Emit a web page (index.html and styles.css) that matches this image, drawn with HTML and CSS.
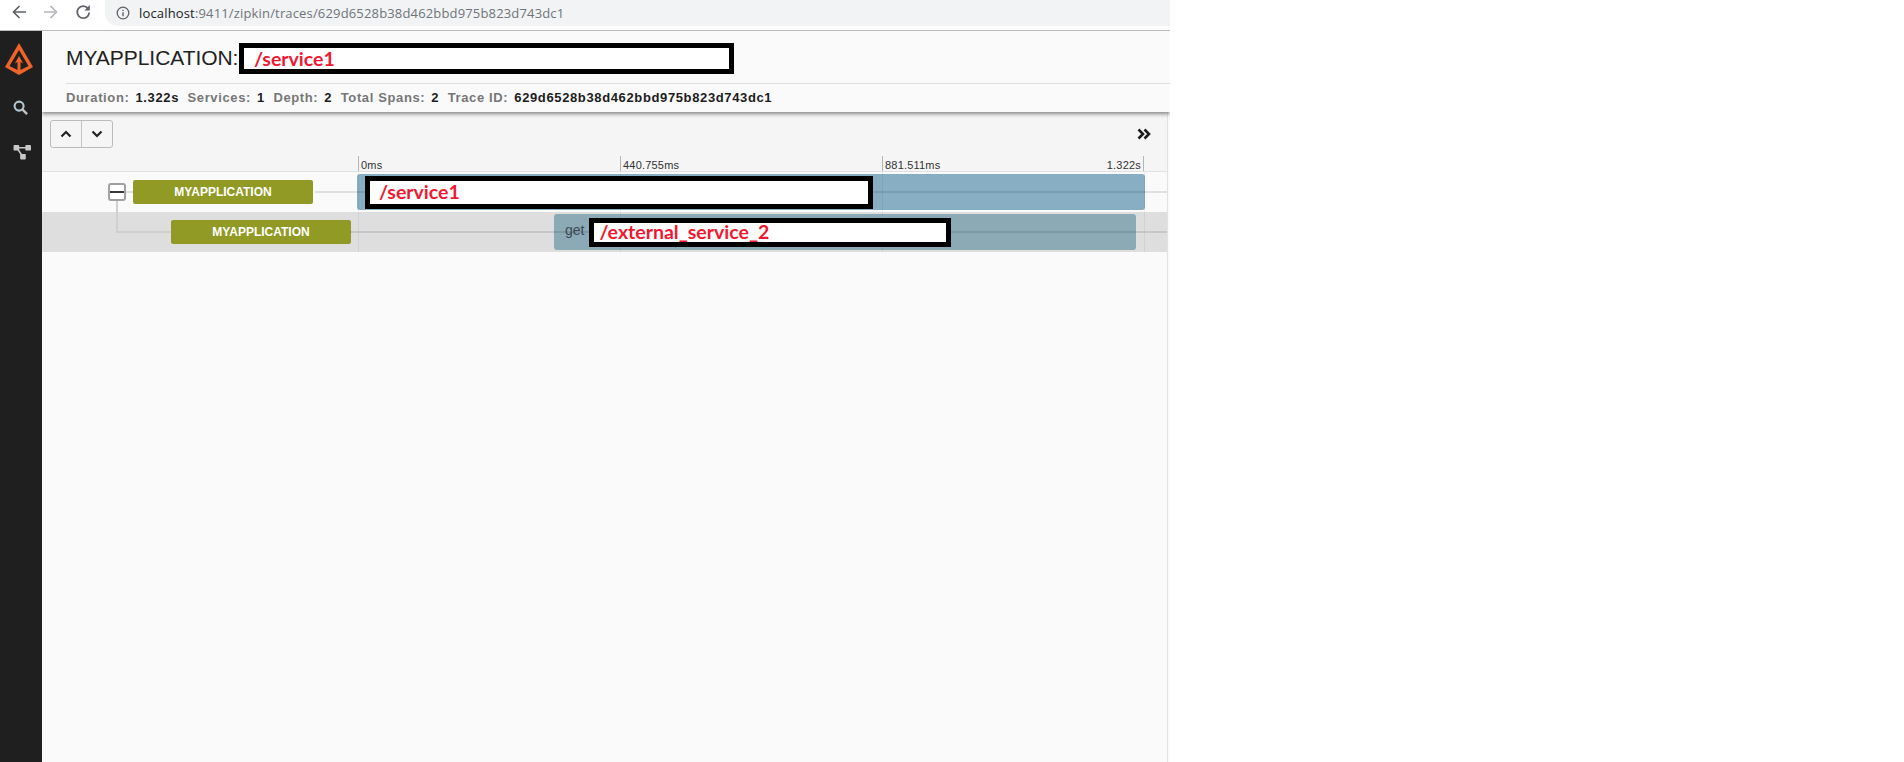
FILE: index.html
```html
<!DOCTYPE html>
<html lang="en">
<head>
<meta charset="utf-8">
<title>Zipkin trace</title>
<link rel="stylesheet" href="styles.css">
</head>
<body>
<div class="frame">
  <div class="browser">
    <div class="nav">
      <svg class="nav-icon" viewBox="0 0 16 16"><path d="M15 8H2.500M8.500 2 2.500 8l6 6" fill="none" stroke="#5f6368" stroke-width="1.700"/></svg>
      <svg class="nav-icon" viewBox="0 0 16 16"><path d="M1 8h12.500M7.500 2l6 6-6 6" fill="none" stroke="#b5b8bc" stroke-width="1.700"/></svg>
      <svg class="nav-icon" viewBox="0 0 16 16"><path d="M13 4.500A6 6 0 1 0 14.200 8.500" fill="none" stroke="#5f6368" stroke-width="1.800"/><path d="M14.800 1V6.500H9.300Z" fill="#5f6368"/></svg>
    </div>
    <div class="omnibox">
      <svg class="info" viewBox="0 0 14 14"><circle cx="7" cy="7" r="5.800" fill="none" stroke="#5f6368" stroke-width="1.300"/><path d="M7 6.200V10.300M7 3.700V5" stroke="#5f6368" stroke-width="1.400"/></svg>
      <span class="url"><span class="host">localhost</span>:9411/zipkin/traces/629d6528b38d462bbd975b823d743dc1</span>
    </div>
  </div>
  <div class="app">
    <nav class="sidebar">
      <svg class="logo" viewBox="0 0 28 32"><path d="M14 0 28 24 14 32 0 24Z" fill="#f0642c"/><path d="M14 7 4.500 23 12.500 27V19L9.800 20.500 14 13 18.200 20.500 15.500 19V27L23.500 23Z" fill="#1f1f1f"/></svg>
      <svg class="side-search" viewBox="0 0 16 16"><circle cx="6.500" cy="6.500" r="4.800" fill="none" stroke="#b4c6d2" stroke-width="2.200"/><path d="M10 10 15 15" stroke="#c4c4c4" stroke-width="2.500"/></svg>
      <svg class="side-deps" viewBox="0 0 20 17"><path d="M4 4H16M4 4 10 13" stroke="#c8c8c8" stroke-width="1.600"/><rect x="0.500" y="1" width="6" height="6" rx="1" fill="#c8c8c8"/><rect x="13" y="1" width="6" height="6" rx="1" fill="#c8c8c8"/><rect x="7.500" y="10.500" width="6" height="6" rx="1" fill="#c8c8c8"/></svg>
    </nav>
    <main class="main">
      <header class="trace-head">
        <div class="title-row">
          <span class="service-name">MYAPPLICATION:</span>
          <span class="redact redact-title">/service1</span>
        </div>
        <div class="stats">
          <span class="stat"><span class="stat-label">Duration:</span><b>1.322s</b></span>
          <span class="stat"><span class="stat-label">Services:</span><b>1</b></span>
          <span class="stat"><span class="stat-label">Depth:</span><b>2</b></span>
          <span class="stat"><span class="stat-label">Total Spans:</span><b>2</b></span>
          <span class="stat"><span class="stat-label">Trace ID:</span><b>629d6528b38d462bbd975b823d743dc1</b></span>
        </div>
      </header>
      <section class="timeline">
        <div class="toolbar">
          <div class="btn-group">
            <button class="btn" type="button" aria-label="Up"><svg viewBox="0 0 12 8"><path d="M1.500 6.500 6 2l4.500 4.500" fill="none" stroke="#222" stroke-width="2.200"/></svg></button>
            <button class="btn" type="button" aria-label="Down"><svg viewBox="0 0 12 8"><path d="M1.500 1.500 6 6l4.500-4.500" fill="none" stroke="#222" stroke-width="2.200"/></svg></button>
          </div>
          <svg class="expand" viewBox="0 0 14 12"><path d="M1.500 1.500 6 6 1.500 10.500M7.500 1.500 12 6 7.500 10.500" fill="none" stroke="#1c1c1c" stroke-width="2.600"/></svg>
        </div>
        <div class="ruler">
          <span class="tick">0ms</span>
          <span class="tick">440.755ms</span>
          <span class="tick">881.511ms</span>
          <span class="tick tick-end">1.322s</span>
        </div>
        <div class="rows">
          <div class="row">
            <div class="label-cell">
              <span class="toggle"></span>
              <span class="badge">MYAPPLICATION</span>
            </div>
            <div class="bar-cell">
              <div class="bar" style="margin-left:-1px;width:788px">
                <span class="redact redact-span">/service1</span>
              </div>
            </div>
          </div>
          <div class="row row-alt">
            <div class="label-cell label-child">
              <span class="elbow"></span>
              <span class="badge">MYAPPLICATION</span>
            </div>
            <div class="bar-cell bar-cell-child">
              <div class="bar bar-alt" style="margin-left:196px;width:582px">
                <span class="get">get</span>
                <span class="redact redact-child">/external_service_2</span>
              </div>
            </div>
          </div>
          <span class="grid-line" style="left:316px"></span>
          <span class="grid-line" style="left:578px"></span>
          <span class="grid-line" style="left:840px"></span>
          <span class="grid-line" style="left:1102px"></span>
        </div>
      </section>
    </main>
  </div>
</div>
</body>
</html>
```
FILE: styles.css
```css
* { box-sizing: border-box; }
html, body { margin: 0; padding: 0; background: #fff; height: 100%; overflow: hidden; }
body { font-family: "Liberation Sans", Arial, sans-serif; color: #222; }
.frame { width: 1170px; height: 762px; display: flex; flex-direction: column; }

.browser { height: 31px; flex: none; display: flex; background: #fff; border-bottom: 1px solid #bdbdbd; }
.nav { width: 105px; flex: none; display: flex; align-items: flex-start; gap: 16px; padding: 4px 0 0 11px; }
.nav-icon { width: 16px; height: 16px; flex: none; }
.omnibox { flex: 1; height: 26px; background: #f1f3f4; border-bottom-left-radius: 13px; display: flex; align-items: center; padding: 0 0 1px 11px; gap: 9px; }
.info { width: 14px; height: 14px; flex: none; }
.url { font-family: "Open Sans", sans-serif; font-size: 13px; letter-spacing: .16px; color: #70757a; white-space: nowrap; }
.host { color: #202124; }

.app { flex: 1; display: flex; min-height: 0; }
.sidebar { width: 42px; flex: none; background: #1f1f1f; display: flex; flex-direction: column; align-items: flex-start; padding-top: 12px; }
.logo { width: 28px; height: 32px; margin-left: 5px; }
.side-search { width: 15px; height: 15px; margin: 25px 0 0 13px; }
.side-deps { width: 19px; height: 16px; margin: 29px 0 0 13px; }

.main { flex: 1; display: flex; flex-direction: column; background: #fafafa; min-width: 0; overflow: hidden; }
.trace-head { height: 81px; flex: none; background: #fafafa; padding-left: 24px; box-shadow: 0 2px 4px rgba(0,0,0,.45); position: relative; z-index: 1; }
.title-row { height: 53px; display: flex; align-items: flex-start; padding-top: 12px; border-bottom: 1px solid #dedede; }
.service-name { font-size: 21px; line-height: 30px; color: #222; letter-spacing: -.05px; width: 173px; flex: none; }
.redact { display: block; position: relative; z-index: 3; background: #fff; border: 5px solid #000; color: #f01830; font-family: Lato, "Open Sans", sans-serif; font-weight: 700; white-space: nowrap; overflow: hidden; }
.redact-title { width: 495px; height: 31px; font-size: 19.500px; line-height: 21px; padding-left: 10px; }
.stats { height: 28px; padding-bottom: 2px; display: flex; align-items: center; font-size: 13px; letter-spacing: .63px; gap: 8.500px; }
.stat { display: flex; gap: 6px; }
.stat-label { color: #777; font-weight: 700; }
.stat b { color: #1d1d1d; }

.timeline { flex: 1; margin-right: 2px; border-right: 1px solid #e2e2e2; background: #fafafa; display: flex; flex-direction: column; }
.toolbar { height: 44px; flex: none; background: #f5f5f5; display: flex; align-items: flex-start; justify-content: space-between; padding: 8px 16px 0 8px; }
.btn-group { display: flex; border: 1px solid #bbb; border-radius: 3px; height: 28px; width: 63px; }
.btn { flex: 1; border: 0; background: transparent; padding: 0; display: flex; align-items: center; justify-content: center; }
.btn + .btn { border-left: 1px solid #c4c4c4; }
.btn svg { width: 12px; height: 8px; }
.expand { width: 14px; height: 12px; margin-top: 8px; }
.ruler { height: 16px; flex: none; background: #f5f5f5; border-bottom: 1px solid #e2e2e2; display: flex; padding-left: 316px; font-size: 11px; letter-spacing: .2px; color: #333; }
.tick { border-left: 1px solid #b5b5b5; padding: 3px 0 0 2px; width: 262px; line-height: 12px; height: 15px; }
.tick-end { width: 0; margin-left: -3px; border-left: 0; border-right: 1px solid #b5b5b5; display: flex; justify-content: flex-end; padding: 3px 2px 0 0; flex: none; white-space: nowrap; }

.rows { position: relative; }
.row { height: 40px; display: flex; background: #fafafa; }
.row-alt { background: #dedede; }
.label-cell { width: 316px; flex: none; display: flex; align-items: center; padding-left: 66px; gap: 7px; position: relative; }
.label-child { padding-left: 129px; }
.toggle { width: 18px; height: 18px; flex: none; border: 2px solid #a0a0a0; border-radius: 3px; background: linear-gradient(#fff 0 6px, #3a3a3a 6px 8px, #fff 8px); position: relative; z-index: 1; }
.toggle::after { content: ""; position: absolute; left: 16px; top: 6px; width: 7px; height: 2px; background: #ddd; }
.elbow { position: absolute; left: 74px; top: -12px; width: 55px; height: 33px; border-left: 2px solid #d0d0d0; border-bottom: 2px solid #d0d0d0; }
.badge { width: 180px; height: 24px; flex: none; background: #909a24; border-radius: 2px; color: #fff; font-size: 12px; font-weight: 700; text-align: center; line-height: 24px; }
.bar-cell { flex: 1; display: flex; align-items: center; position: relative; }
.bar-cell::before { content: ""; position: absolute; left: -43px; right: 0; top: 19px; height: 2px; background: rgba(0,0,0,.1); z-index: 2; }
.bar-cell-child::before { left: -8px; }
.bar { height: 36px; background: #87aec2; border-radius: 3px; display: flex; align-items: center; padding-left: 8px; }
.bar-alt { background: #8caab6; padding-left: 11px; }
.redact-span { width: 508px; height: 33px; margin-top: 1px; font-size: 19.500px; line-height: 22px; padding-left: 9px; }
.get { font-size: 14px; color: #3a4a55; margin-right: 5px; padding-bottom: 4px; }
.redact-child { width: 362px; height: 29px; margin-top: 1px; font-size: 19.500px; line-height: 18px; padding-left: 5px; }
.grid-line { position: absolute; top: 0; bottom: 0; width: 1px; background: rgba(0,0,0,.05); z-index: 2; }
```
